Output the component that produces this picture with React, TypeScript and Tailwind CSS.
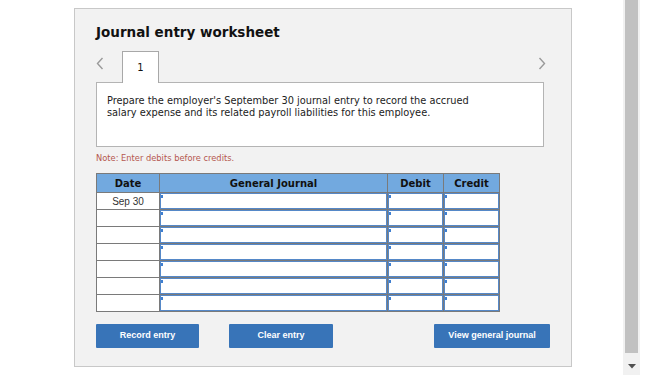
const ROWS = ["Sep 30", "", "", "", "", "", ""];

function InputCell({ width }: { width: string }) {
  return (
    <div className={`${width} h-[17px] border-r border-b border-[#7a7a7a]`}>
      <div className="relative h-full w-full border border-[#5588c8] bg-white">
        <span className="absolute left-0 top-[1px] h-[3px] w-[2px] bg-[#3f7fd0]" />
      </div>
    </div>
  );
}

function Chevron({ dir }: { dir: "left" | "right" }) {
  return (
    <svg width="8" height="13" viewBox="0 0 8 13" fill="none">
      <path
        d={dir === "left" ? "M6.5 1 L1.5 6.5 L6.5 12" : "M1.5 1 L6.5 6.5 L1.5 12"}
        stroke="#9a9a9a"
        strokeWidth="1.4"
      />
    </svg>
  );
}

export default function App() {
  return (
    <div className="flex h-[375px] w-[666px] bg-white font-['DejaVu_Sans',sans-serif]">
      <div className="ml-[74px] mt-[8px] h-[359px] w-[498px] border border-[#c8c8c8] bg-[#f2f2f2] pl-[21px] pr-[28px]">
        <h1 className="mt-[14px] h-[18px] text-[13.5px] font-bold leading-[18px] text-[#111]">
          Journal entry worksheet
        </h1>

        <div className="mt-[10px] flex h-[31px] items-start">
          <div className="mt-[6px] w-[26px]">
            <Chevron dir="left" />
          </div>
          <div className="relative z-10 flex h-[32px] w-[37px] items-center justify-center border border-b-0 border-[#a8a8a8] bg-white text-[10px] text-[#111]">
            1
          </div>
          <div className="ml-auto mt-[6px] mr-[-3px]">
            <Chevron dir="right" />
          </div>
        </div>

        <div className="h-[65px] w-[448px] border border-[#b4b4b4] bg-white px-[10px] pt-[12px] text-[9.8px] leading-[12px] text-[#222]">
          Prepare the employer's September 30 journal entry to record the accrued
          <br />
          salary expense and its related payroll liabilities for this employee.
        </div>

        <p className="mt-[6px] text-[8.3px] leading-[10px] text-[#b5584f]">
          Note: Enter debits before credits.
        </p>

        <div className="mt-[10px] w-[404px] border-l border-t border-[#7a7a7a]">
          <div className="flex h-[19px] bg-[#72a9df] text-[10px] font-bold text-[#111]">
            <div className="flex w-[63px] items-center justify-center border-r border-b border-[#7a7a7a]">Date</div>
            <div className="flex w-[228px] items-center justify-center border-r border-b border-[#7a7a7a]">
              General Journal
            </div>
            <div className="flex w-[56px] items-center justify-center border-r border-b border-[#7a7a7a]">Debit</div>
            <div className="flex w-[56px] items-center justify-center border-r border-b border-[#7a7a7a]">Credit</div>
          </div>
          {ROWS.map((date, i) => (
            <div key={i} className="flex">
              <div className="flex h-[17px] w-[63px] items-center justify-center border-r border-b border-[#7a7a7a] bg-white font-['Liberation_Sans',sans-serif] text-[10px] text-[#333]">
                {date}
              </div>
              <InputCell width="w-[228px]" />
              <InputCell width="w-[56px]" />
              <InputCell width="w-[56px]" />
            </div>
          ))}
        </div>

        <div className="mt-[12px] flex font-['Liberation_Sans',sans-serif] text-[9px] font-bold text-white">
          <button className="h-[24px] w-[103px] shrink-0 rounded-[1px] bg-[#3874b8]">Record entry</button>
          <button className="ml-[30px] h-[24px] w-[104px] shrink-0 rounded-[1px] bg-[#3874b8]">Clear entry</button>
          <button className="ml-[101px] h-[24px] w-[116px] shrink-0 rounded-[1px] bg-[#3874b8]">
            View general journal
          </button>
        </div>
      </div>

      <div className="ml-[51px] flex h-[375px] w-[17px] flex-col items-center bg-[#f1f1f1]">
        <div className="h-[353px] w-[13px] bg-[#c1c1c1]" />
        <svg className="mt-[11px]" width="8" height="5" viewBox="0 0 8 5">
          <path d="M0 0 H8 L4 4.5 Z" fill="#505050" />
        </svg>
      </div>
    </div>
  );
}
